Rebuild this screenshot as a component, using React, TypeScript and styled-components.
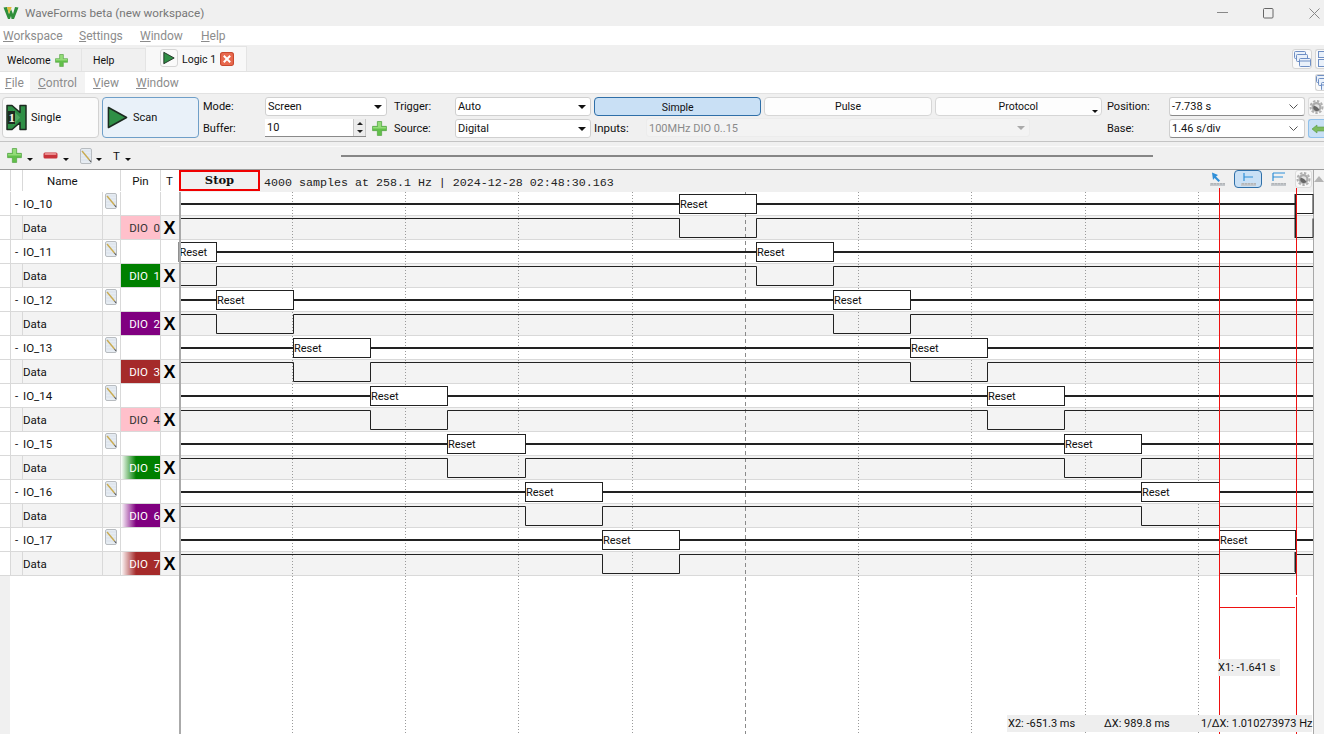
import React from 'react';
import styled, { createGlobalStyle } from 'styled-components';

const GlobalStyle = createGlobalStyle`
  html, body { margin: 0; padding: 0; background: #fff; overflow: hidden; }
  body { font-family: Roboto, "Open Sans", sans-serif; font-size: 11.5px; color: #111; }
`;

// Layout
const Page = styled.div`
  width: 1324px;
  height: 734px;
  display: flex;
  flex-direction: column;
  overflow: hidden;
`;

const TitleBar = styled.div`
  height: 26px;
  background: #f0f0f0;
  display: flex;
  align-items: center;
  padding-left: 3px;
  color: #777;
  font-size: 11.7px;
  span { margin-left: 6px; flex: 1; }
`;

const WinButton = styled.div<{ $last?: boolean }>`
  width: 46px;
  margin-right: ${(p) => (p.$last ? -13 : 0)}px;
  display: flex;
  justify-content: center;
  align-items: center;
`;

const MenuBar = styled.div<{ $height: number; $flush?: boolean }>`
  height: ${(p) => p.$height}px;
  background: #fff;
  display: flex;
  align-items: center;
  padding-left: ${(p) => (p.$flush ? 0 : 3)}px;
  color: #8c8c8c;
  font-size: 12px;
`;

const MenuItem = styled.div<{ $width: number; $hover?: boolean; $pad?: number }>`
  width: ${(p) => p.$width}px;
  height: 100%;
  display: flex;
  align-items: center;
  padding-left: ${(p) => p.$pad ?? (p.$hover ? 8 : 0)}px;
  box-sizing: border-box;
  background: ${(p) => (p.$hover ? '#f3f3f3' : 'transparent')};
  u { text-underline-offset: 1px; }
`;

const TabBar = styled.div`
  height: 27px;
  background: #f0f0f0;
  border-bottom: 1px solid #e2e2e2;
  box-sizing: border-box;
  display: flex;
  align-items: flex-end;
`;

const Tab = styled.div<{ $width: number; $active?: boolean; $pad: number }>`
  width: ${(p) => p.$width}px;
  height: ${(p) => (p.$active ? 25 : 23)}px;
  background: ${(p) => (p.$active ? '#f8f8f8' : '#f0f0f0')};
  border: 1px solid #e4e4e4;
  border-width: 1px 1px 0 0;
  box-sizing: border-box;
  display: flex;
  align-items: center;
  gap: 4px;
  padding-left: ${(p) => p.$pad}px;
  color: #111;
  font-size: 10.5px;
`;

const Spacer = styled.div`
  flex: 1;
`;

const IconFrame = styled.div<{ $width: number; $height: number; $clip?: boolean; $mr?: number }>`
  width: ${(p) => p.$width}px;
  height: ${(p) => p.$height}px;
  margin: 0 ${(p) => p.$mr ?? 0}px ${(p) => (p.$clip && p.$height < 18 ? 0 : 2)}px 0;
  border: 1px solid #d5d5d5;
  border-right: ${(p) => (p.$clip ? 'none' : '1px solid #d5d5d5')};
  border-radius: ${(p) => (p.$clip ? '3px 0 0 3px' : '3px')};
  background: #fafafa;
  box-sizing: border-box;
  overflow: hidden;
  display: flex;
  align-items: center;
  justify-content: ${(p) => (p.$clip ? 'flex-start' : 'center')};
  flex-shrink: 0;
`;

const ToolBar = styled.div`
  height: 49px;
  background: #f0f0f0;
  border-top: 1px solid #e2e2e2;
  border-bottom: 1px solid #c4c4c4;
  box-sizing: border-box;
  display: flex;
  align-items: flex-start;
  padding: 3px 0 0 2px;
  overflow: hidden;
  font-size: 11px;
`;

const RunButton = styled.div<{ $on?: boolean }>`
  width: 97px;
  height: 41px;
  margin-right: 3px;
  flex-shrink: 0;
  box-sizing: border-box;
  border: 1px solid ${(p) => (p.$on ? '#6f9fc8' : '#d2d2d2')};
  border-radius: 4px;
  background: ${(p) => (p.$on ? '#e9f1f9' : '#fbfbfb')};
  display: flex;
  align-items: center;
  gap: ${(p) => (p.$on ? 5 : 4)}px;
  padding-left: ${(p) => (p.$on ? 4 : 3)}px;
`;

const FieldGrid = styled.div<{ $cols: string; $ml: number }>`
  display: grid;
  grid-template-columns: ${(p) => p.$cols};
  grid-auto-rows: 22px;
  margin: -2px 0 0 ${(p) => p.$ml}px;
  align-items: center;
`;

const FieldLabel = styled.span`
  padding-top: 1px;
`;

const Select = styled.div<{ $plain?: boolean; $disabled?: boolean; $width?: number }>`
  height: 19px;
  width: ${(p) => (p.$width ? `${p.$width}px` : 'auto')};
  box-sizing: border-box;
  background: ${(p) => (p.$disabled ? '#f3f3f3' : '#fff')};
  color: ${(p) => (p.$disabled ? '#8a8a8a' : '#111')};
  border: 1px solid ${(p) => (p.$disabled ? '#ececec' : '#d0d0d0')};
  border-bottom: 1px solid ${(p) => (p.$plain ? '#8a8a8a' : p.$disabled ? '#ececec' : '#d0d0d0')};
  border-radius: 3px;
  display: flex;
  align-items: center;
  justify-content: space-between;
  padding: 1px 2px 0 2px;
`;

const Caret = styled.div<{ $muted?: boolean }>`
  width: 0;
  height: 0;
  margin-right: 2px;
  border-left: 4px solid transparent;
  border-right: 4px solid transparent;
  border-top: 4px solid ${(p) => (p.$muted ? '#aaa' : '#111')};
`;

const BufferRow = styled.div`
  display: flex;
  align-items: center;
`;

const Spin = styled.div`
  width: 101px;
  height: 18px;
  box-sizing: border-box;
  background: #fff;
  border-bottom: 1px solid #8a8a8a;
  display: flex;
  align-items: center;
  justify-content: space-between;
  padding-left: 2px;
`;

const SpinArrows = styled.div`
  width: 13px;
  height: 17px;
  background: #ececec;
  border: 1px solid #c8c8c8;
  border-width: 0 1px;
  box-sizing: border-box;
  display: flex;
  flex-direction: column;
  justify-content: space-around;
  align-items: center;
`;

const Tri = styled.div<{ $up?: boolean }>`
  border-left: 3px solid transparent;
  border-right: 3px solid transparent;
  ${(p) => (p.$up ? 'border-bottom: 3px solid #222;' : 'border-top: 3px solid #222;')}
`;

const BufferPlus = styled.span`
  margin-left: 6px;
  display: flex;
`;

const ModeColumn = styled.div`
  width: 508px;
  margin-left: 3px;
  display: flex;
  flex-direction: column;
  flex-shrink: 0;
`;

const ModeTabs = styled.div`
  display: flex;
  gap: 3px;
  height: 22px;
  font-size: 10.5px;
`;

const ModeTab = styled.div<{ $on?: boolean }>`
  width: 168px;
  height: 19px;
  box-sizing: border-box;
  border: 1px solid ${(p) => (p.$on ? '#2f6fa8' : '#d6d6d6')};
  border-radius: 4px;
  background: ${(p) => (p.$on ? '#c9e0f5' : '#fdfdfd')};
  text-align: center;
  line-height: ${(p) => (p.$on ? 20 : 17)}px;
  position: relative;
`;

const ProtoCaret = styled.i`
  position: absolute;
  right: 3px;
  bottom: 2px;
  border-left: 3px solid transparent;
  border-right: 3px solid transparent;
  border-top: 3px solid #111;
`;

const InputsRow = styled.div`
  display: flex;
  align-items: center;
  height: 19px;
  margin-top: -1px;
`;

const InputsLabel = styled.span`
  width: 52px;
  font-size: 11.5px;
`;

const GearFrame = styled.div<{ $on?: boolean }>`
  width: 16px;
  height: 19px;
  margin-bottom: 3px;
  box-sizing: border-box;
  border: 1px solid ${(p) => (p.$on ? '#8fc0ea' : '#dcdcdc')};
  border-right: none;
  border-radius: 3px 0 0 3px;
  background: ${(p) => (p.$on ? '#c9e0f5' : '#f7f7f7')};
  overflow: hidden;
  display: flex;
  align-items: center;
`;

const SideColumn = styled.div`
  margin-left: 3px;
  display: flex;
  flex-direction: column;
`;

const ToolStrip = styled.div`
  height: 28px;
  background: #f0f0f0;
  border-bottom: 1px solid #9b9b9b;
  box-sizing: border-box;
  display: flex;
  align-items: center;
  padding-left: 7px;
`;

const StripItem = styled.div<{ $width: number; $gap: number }>`
  width: ${(p) => p.$width}px;
  display: flex;
  align-items: center;
  gap: ${(p) => p.$gap}px;
`;

const DownMark = styled.i`
  margin-top: 8px;
  border-left: 3px solid transparent;
  border-right: 3px solid transparent;
  border-top: 3px solid #111;
`;

const TrackArea = styled.div`
  flex: 1;
  align-self: stretch;
  margin-top: 4px;
  border-top: 1px solid #fafafa;
  display: flex;
  align-items: flex-start;
  padding: 8px 0 0 181px;
`;

const Track = styled.div`
  width: 812px;
  height: 2px;
  background: #868686;
`;

const Main = styled.div`
  flex: 1;
  display: flex;
  min-height: 0;
`;

const SignalTable = styled.div`
  width: 179px;
  display: flex;
  flex-direction: column;
  flex-shrink: 0;
  background: #fff;
`;

const Row = styled.div<{ $height: number; $shade?: boolean }>`
  height: ${(p) => p.$height}px;
  box-sizing: border-box;
  display: grid;
  grid-template-columns: 11px 12px 80px 18px 40px 18px;
  border-bottom: 1px solid ${(p) => (p.$height === 22 ? 'transparent' : '#d9d9d9')};
  background: ${(p) => (p.$shade ? 'linear-gradient(90deg, #fff 10px, #f3f3f3 10px)' : '#fff')};
`;

const Cell = styled.div<{ $center?: boolean; $rule?: boolean; $pad?: number }>`
  display: flex;
  align-items: center;
  justify-content: ${(p) => (p.$center ? 'center' : 'flex-start')};
  border-right: 1px solid ${(p) => (p.$rule === false ? 'transparent' : '#d9d9d9')};
  padding-left: ${(p) => p.$pad ?? 0}px;
  box-sizing: border-box;
  min-width: 0;
  overflow: hidden;
`;

const PencilCell = styled(Cell)`
  align-items: flex-start;
  padding: 1px 0 0 2px;
  justify-content: flex-start;
`;

const PinCell = styled.div<{ $bg: string; $color: string }>`
  background: ${(p) => p.$bg};
  color: ${(p) => p.$color};
  border-right: 1px solid #d9d9d9;
  box-sizing: border-box;
  display: flex;
  align-items: center;
  justify-content: flex-end;
  white-space: pre;
`;

const TMark = styled.div`
  font-family: "Liberation Sans", sans-serif;
  font-weight: 700;
  font-size: 18px;
  color: #000;
  line-height: 1;
`;

const TableFill = styled.div`
  flex: 1;
  background: linear-gradient(90deg, #f0f0f0 10px, #fff 10px);
`;

const PlotArea = styled.div`
  flex: 1;
  min-width: 0;
  display: flex;
  flex-direction: column;
  position: relative;
`;

const PlotHeader = styled.div`
  height: 22px;
  flex-shrink: 0;
  background: #f0f0f0;
  display: flex;
  align-items: center;
`;

const StopButton = styled.div`
  width: 81px;
  height: 21px;
  margin-top: -1px;
  box-sizing: border-box;
  border: 2px solid #f00000;
  text-align: center;
  line-height: 16px;
  font-family: "DejaVu Serif", serif;
  font-weight: 700;
  font-size: 11.5px;
  color: #111;
`;

const Summary = styled.div`
  margin-left: 4px;
  flex: 1;
  font-family: "Liberation Mono", monospace;
  font-size: 11.67px;
  color: #222;
  padding-top: 3px;
`;

const MeasureIcons = styled.div`
  display: flex;
  align-items: center;
  gap: 9px;
  margin: 0 1px 4px 0;
`;

const MeasureBtn = styled.div<{ $on?: boolean }>`
  width: ${(p) => (p.$on ? 28 : 15)}px;
  height: 18px;
  box-sizing: border-box;
  display: flex;
  justify-content: center;
  align-items: center;
  border: ${(p) => (p.$on ? '1px solid #2f6fa8' : 'none')};
  border-radius: 4px;
  background: ${(p) => (p.$on ? '#c9e0f5' : 'transparent')};
`;

const GearBtn = styled.div`
  width: 17px;
  height: 18px;
  box-sizing: border-box;
  border: 1px solid #dcdcdc;
  border-radius: 3px;
  display: flex;
  align-items: center;
  justify-content: center;
  background: #f7f7f7;
`;

const ScrollGutter = styled.div`
  width: 11px;
  flex-shrink: 0;
  background: #f3f3f3;
  border-left: 1px solid #a8a8a8;
  box-sizing: border-box;
  display: flex;
  justify-content: center;
  padding-top: 6px;
`;

const UpMark = styled.i`
  height: 0;
  border-left: 5px solid transparent;
  border-right: 5px solid transparent;
  border-bottom: 6px solid #b4b4b4;
`;

const Wave = styled.svg`
  display: block;
  flex: 1;
  min-height: 0;
  width: 1134px;
  overflow: visible;
  position: relative;
`;

const ResetText = styled.text`
  font-family: Roboto, "Open Sans", sans-serif;
  font-size: 11px;
  fill: #111;
`;

const Readout = styled.div<{ $right: number; $bottom: number; $width: number }>`
  position: absolute;
  right: ${(p) => p.$right}px;
  bottom: ${(p) => p.$bottom}px;
  width: ${(p) => p.$width}px;
  height: 17px;
  background: #eeeeee;
  display: flex;
  align-items: center;
  font-size: 11px;
  color: #111;
  white-space: pre;
`;

const ReadoutText = styled.span<{ $width: number; $pad?: number }>`
  width: ${(p) => p.$width}px;
  padding-left: ${(p) => p.$pad ?? 0}px;
  box-sizing: border-box;
  flex-shrink: 0;
`;

// Icons
const Logo = () => (
  <svg width="16" height="14" viewBox="0 0 16 14">
    <path d="M0.5 1.5 L4 1 L6 8 L8 3 L10 8 L12 1 L15.5 1.5 L11 13 L8.5 13 L8 10 L7 13 L5 13 Z" fill="#2f8f3a" />
    <path d="M4 1 L6 8 L8 3 L8.6 1 L6.5 1 Z" fill="#e0b93a" />
  </svg>
);

const PlayIcon = ({ size = 22 }: { size?: number }) => (
  <svg width={size} height={size + 2} viewBox="0 0 22 24">
    <path d="M1.5 1.5 L20.5 12 L1.5 22.5 Z" fill="#2f8f46" stroke="#1c2a20" strokeWidth="1.6" strokeLinejoin="round" />
  </svg>
);

const SingleIcon = () => (
  <svg width="21" height="27" viewBox="0 0 21 27">
    <path d="M1 1.5 H6 L14 8.5 V1.5 H20 V25.5 H14 V18.5 L6 25.5 H1 Z" fill="#2f8f46" stroke="#1c2a20" strokeWidth="1.5" strokeLinejoin="round" />
    <path d="M7 6 L14 13.5 L7 21 Z" fill="#4ea65f" />
    <rect x="2" y="7" width="7" height="13" fill="#1c2a20" />
    <text x="2.6" y="18" fontFamily="Liberation Serif, serif" fontWeight="700" fontSize="13" fill="#f4f4e8">1</text>
  </svg>
);

const PlusIcon = ({ size = 14 }: { size?: number }) => (
  <svg width={size} height={size} viewBox="0 0 14 14">
    <path d="M5 0.5 H9 V5 H13.5 V9 H9 V13.5 H5 V9 H0.5 V5 H5 Z" fill="#62c04a" stroke="#4f9f3e" strokeWidth="0.6" />
    <path d="M5.5 1 H8.5 V5.5 H13 V7 H1 V5.5 H5.5 Z" fill="#93dc78" />
  </svg>
);

const MinusIcon = () => (
  <svg width="15" height="8" viewBox="0 0 15 8">
    <rect x="0.5" y="0.5" width="14" height="6" rx="1.5" fill="#c8333a" />
    <rect x="1.5" y="1" width="12" height="2" rx="1" fill="#e98a8c" />
  </svg>
);

const PencilIcon = () => (
  <svg width="12" height="16" viewBox="0 0 12 16">
    <rect x="0.5" y="0.5" width="11" height="15" rx="1.5" fill="#e6ecf2" stroke="#b8bcc0" />
    <path d="M1 3 H11 M1 6 H11 M1 9 H11 M1 12 H11" stroke="#d3dce5" strokeWidth="0.6" />
    <path d="M2 3 L9.5 12" stroke="#c9ab52" strokeWidth="1.4" />
    <path d="M9.5 12 L11 14" stroke="#555" strokeWidth="1.1" />
  </svg>
);

const GearIcon = () => (
  <svg width="15" height="16" viewBox="0 0 15 16" style={{ flexShrink: 0 }}>
    <circle cx="7.5" cy="8" r="6" fill="none" stroke="#b0b0b0" strokeWidth="2" strokeDasharray="2.4 1.6" />
    <circle cx="7.5" cy="8" r="5" fill="#ababab" />
    <circle cx="7.5" cy="8" r="2.8" fill="#e2e2e2" />
    <path d="M5 6.5 A3.2 3.2 0 0 0 10.5 10.5 L8 8 Z" fill="#666" />
  </svg>
);

const StackIcon = () => (
  <svg width="17" height="16" viewBox="0 0 17 16" style={{ flexShrink: 0 }}>
    <g fill="#eaf1fa" stroke="#6f8fc4" strokeWidth="1">
      <rect x="0.5" y="0.5" width="11" height="7" rx="1" />
      <rect x="2.5" y="3.5" width="11" height="7" rx="1" />
      <rect x="5.5" y="7.5" width="11" height="8" rx="1" />
    </g>
    <path d="M5.5 10 H16.5" stroke="#6f8fc4" />
  </svg>
);

const TileIcon = () => (
  <svg width="14" height="16" viewBox="0 0 14 16" style={{ flexShrink: 0, marginLeft: 2 }}>
    <rect x="0.5" y="0.5" width="13" height="6" fill="#eaf1fa" stroke="#6f8fc4" />
    <rect x="0.5" y="8.5" width="13" height="7" fill="#eaf1fa" stroke="#6f8fc4" />
  </svg>
);

const ChevronIcon = styled.svg`
  margin-right: 4px;
`;

const ChevronDown = () => (
  <ChevronIcon width="9" height="6" viewBox="0 0 9 6">
    <path d="M0.5 0.5 L4.5 4.5 L8.5 0.5" fill="none" stroke="#555" strokeWidth="1" />
  </ChevronIcon>
);

const BackArrow = () => (
  <svg width="16" height="10" viewBox="0 0 16 10" style={{ marginLeft: 3, flexShrink: 0 }}>
    <path d="M0 5 L5 1 V3 H16 V7 H5 V9 Z" fill="#7dbb5e" stroke="#5c9a45" strokeWidth="0.6" />
  </svg>
);

const RulerIcon = ({ kind }: { kind: 'arrow' | 'mid' | 'top' }) => (
  <svg width="15" height="14" viewBox="0 0 15 14">
    {kind === 'arrow' && <path d="M2 0.5 L8 3 L6 4.5 L10 8.5 L8.5 10 L4.5 6 L3 8 Z" fill="#2f8fd8" />}
    {kind === 'mid' && <path d="M3 1 V9 M3 5 H12" stroke="#2f8fd8" strokeWidth="1.2" fill="none" />}
    {kind === 'top' && <path d="M2 1 V9 M2 1 H14 M2 5 H12" stroke="#2f8fd8" strokeWidth="1.2" fill="none" />}
    <rect x="0" y="11" width="15" height="3" fill="#c4c8cc" />
    <path d="M2 11 V12.5 M5 11 V12.5 M8 11 V12.5 M11 11 V12.5 M14 11 V12.5" stroke="#8f8f8f" strokeWidth="0.7" />
  </svg>
);

// Data
const PINK = '#ffc0cb';
const GREEN = '#008000';
const PURPLE = '#800080';
const BROWN = '#a52a2a';
const fade = (c: string) => `linear-gradient(90deg, #fff 0, ${c} 15px)`;

const signals = [
  { name: 'IO_10', bg: PINK, color: '#333' },
  { name: 'IO_11', bg: GREEN, color: '#fff' },
  { name: 'IO_12', bg: PURPLE, color: '#fff' },
  { name: 'IO_13', bg: BROWN, color: '#fff' },
  { name: 'IO_14', bg: PINK, color: '#333' },
  { name: 'IO_15', bg: fade(GREEN), color: '#fff' },
  { name: 'IO_16', bg: fade(PURPLE), color: '#fff' },
  { name: 'IO_17', bg: fade(BROWN), color: '#fff' },
];

// 各信号のResetの区間
const edges = [179, 216.5, 293.5, 370.5, 447.5, 525.5, 602.5, 679.5, 756.5, 833.5, 910.5, 987.5, 1064.5, 1141.5, 1219.5, 1295.5, 1313];
const resets: [number, number][][] = [
  [[edges[7], edges[8]], [edges[15], edges[16]]],
  [[edges[0], edges[1]], [edges[8], edges[9]]],
  [[edges[1], edges[2]], [edges[9], edges[10]]],
  [[edges[2], edges[3]], [edges[10], edges[11]]],
  [[edges[3], edges[4]], [edges[11], edges[12]]],
  [[edges[4], edges[5]], [edges[12], edges[13]]],
  [[edges[5], edges[6]], [edges[13], edges[14]]],
  [[edges[6], edges[7]], [edges[14], edges[15]]],
];
const gridLines = [292.5, 405.5, 518.5, 632.5, 858.5, 971.5, 1085.5, 1198.5];
const PLOT_END = 1313;

function WavePlot() {
  return (
    <Wave viewBox="179 192 1134 542">
      {signals.map((_, i) => (
        <g key={i}>
          <rect x="179" y={216 + i * 48} width="1134" height="24" fill="#f3f3f3" />
          <path d={`M179 ${215.5 + i * 48} H1313 M179 ${239.5 + i * 48} H1313`} stroke="#d9d9d9" />
        </g>
      ))}
      {gridLines.map((x) => (
        <path key={x} d={`M${x} 192 V734`} stroke="#9a9a9a" strokeDasharray="1 2" />
      ))}
      <path d="M745.5 192 V734" stroke="#8a8a8a" strokeDasharray="4 3" />
      {resets.map((segs, i) => {
        const y = 192 + i * 48;
        const top = y + 26.5;
        const low = y + 45.5;
        let bus = '';
        let x = 179;
        let data = `M179 ${top}`;
        segs.forEach(([a, b]) => {
          if (a > x) bus += `M${x} ${y + 12} H${a} `;
          x = b;
          data = a === 179
            ? `M179 ${low} H${b} V${top}`
            : `${data} H${a} V${low} H${b} V${top}`;
        });
        if (x < PLOT_END) bus += `M${x} ${y + 12} H${PLOT_END}`;
        data += ` H${PLOT_END}`;
        return (
          <g key={i}>
            <path d={bus} stroke="#222" strokeWidth="2" fill="none" />
            <path d={data} stroke="#222" strokeWidth="1" fill="none" />
            {segs.map(([a, b]) => (
              <g key={a}>
                <rect x={a} y={y + 2.5} width={b - a} height={19} fill="#fff" stroke="#222" />
                {b - a > 30 && <ResetText x={a + 0.5} y={y + 16}>Reset</ResetText>}
              </g>
            ))}
          </g>
        );
      })}
      {/* 右端の太い線 */}
      <path d="M1295.5 194 V238 M1295.5 552 V572" stroke="#222" strokeWidth="2" />
      <path d="M180 192 V734" stroke="#aaa" strokeWidth="2" />
      <path d="M1219.5 188 V734" stroke="#ee1111" />
      <path d="M1296.5 188 V595 M1296.5 597 V734" stroke="#ee1111" />
      <path d="M1220 607.5 H1295" stroke="#ee1111" />
    </Wave>
  );
}

const Menu = ({ label, width, hover, pad }: { label: string; width: number; hover?: boolean; pad?: number }) => (
  <MenuItem $width={width} $hover={hover} $pad={pad}>
    <span><u>{label[0]}</u>{label.slice(1)}</span>
  </MenuItem>
);

export default function App() {
  return (
    <>
      <GlobalStyle />
      <Page>
        <TitleBar>
          <Logo />
          <span>WaveForms beta (new workspace)</span>
          <WinButton>
            <svg width="11" height="2"><rect width="11" height="1" fill="#888" /></svg>
          </WinButton>
          <WinButton>
            <svg width="11" height="11"><rect x="0.5" y="0.5" width="9.5" height="9.5" rx="1" fill="none" stroke="#666" /></svg>
          </WinButton>
          <WinButton $last>
            <svg width="11" height="11"><path d="M0.5 0.5 L10.5 10.5 M10.5 0.5 L0.5 10.5" stroke="#888" /></svg>
          </WinButton>
        </TitleBar>

        <MenuBar $height={19}>
          <Menu label="Workspace" width={76} />
          <Menu label="Settings" width={61} />
          <Menu label="Window" width={61} />
          <Menu label="Help" width={60} />
        </MenuBar>

        <TabBar>
          <Tab $width={82} $pad={7}>Welcome<PlusIcon size={13} /></Tab>
          <Tab $width={64} $pad={11}>Help</Tab>
          <Tab $width={101} $pad={14} $active>
            <IconFrame $width={18} $height={18}><PlayIcon size={12} /></IconFrame>
            Logic 1
            <svg width="14" height="14" viewBox="0 0 13 13">
              <rect x="0.5" y="0.5" width="12" height="12" rx="2" fill="#e8694e" stroke="#c9492f" />
              <path d="M3.5 3.5 L9.5 9.5 M9.5 3.5 L3.5 9.5" stroke="#fff" strokeWidth="1.8" />
            </svg>
          </Tab>
          <Spacer />
          <IconFrame $width={20} $height={20} $mr={3}><StackIcon /></IconFrame>
          <IconFrame $width={9} $height={20} $clip><TileIcon /></IconFrame>
        </TabBar>

        <MenuBar $height={21} $flush>
          <Menu label="File" width={30} pad={5} />
          <Menu label="Control" width={55} hover />
          <Menu label="View" width={51} pad={8} />
          <Menu label="Window" width={60} />
          <Spacer />
          <IconFrame $width={9} $height={17} $clip><StackIcon /></IconFrame>
        </MenuBar>

        <ToolBar>
          <RunButton><SingleIcon />Single</RunButton>
          <RunButton $on><PlayIcon size={21} />Scan</RunButton>

          <FieldGrid $cols="62px 122px" $ml={1}>
            <FieldLabel>Mode:</FieldLabel>
            <Select>Screen<Caret /></Select>
            <FieldLabel>Buffer:</FieldLabel>
            <BufferRow>
              <Spin>
                10
                <SpinArrows><Tri $up /><Tri /></SpinArrows>
              </Spin>
              <BufferPlus><PlusIcon size={15} /></BufferPlus>
            </BufferRow>
          </FieldGrid>

          <FieldGrid $cols="61px 136px" $ml={7}>
            <FieldLabel>Trigger:</FieldLabel>
            <Select>Auto<Caret /></Select>
            <FieldLabel>Source:</FieldLabel>
            <Select>Digital<Caret /></Select>
          </FieldGrid>

          <ModeColumn>
            <ModeTabs>
              <ModeTab $on>Simple</ModeTab>
              <ModeTab>Pulse</ModeTab>
              <ModeTab>Protocol<ProtoCaret /></ModeTab>
            </ModeTabs>
            <InputsRow>
              <InputsLabel>Inputs:</InputsLabel>
              <Select $disabled $width={384}>100MHz DIO 0..15<Caret $muted /></Select>
            </InputsRow>
          </ModeColumn>

          <FieldGrid $cols="62px 136px" $ml={5}>
            <FieldLabel>Position:</FieldLabel>
            <Select $plain>-7.738 s<ChevronDown /></Select>
            <FieldLabel>Base:</FieldLabel>
            <Select $plain>1.46 s/div<ChevronDown /></Select>
          </FieldGrid>

          <SideColumn>
            <GearFrame><GearIcon /></GearFrame>
            <GearFrame $on><BackArrow /></GearFrame>
          </SideColumn>
        </ToolBar>

        <ToolStrip>
          <StripItem $width={36} $gap={5}><PlusIcon size={15} /><DownMark /></StripItem>
          <StripItem $width={37} $gap={5}><MinusIcon /><DownMark /></StripItem>
          <StripItem $width={33} $gap={4}><PencilIcon /><DownMark /></StripItem>
          <StripItem $width={47} $gap={5}>T<DownMark /></StripItem>
          <TrackArea><Track /></TrackArea>
        </ToolStrip>

        <Main>
          <SignalTable>
            <Row $height={22}>
              <Cell />
              <Cell />
              <Cell $rule={false} $pad={24}>Name</Cell>
              <Cell />
              <Cell $center>Pin</Cell>
              <Cell $center $rule={false}>T</Cell>
            </Row>
            {signals.map((s, i) => (
              <React.Fragment key={s.name}>
                <Row $height={24}>
                  <Cell />
                  <Cell $center $rule={false}>-</Cell>
                  <Cell>{s.name}</Cell>
                  <PencilCell><PencilIcon /></PencilCell>
                  <Cell />
                  <Cell $rule={false} />
                </Row>
                <Row $height={24} $shade>
                  <Cell />
                  <Cell />
                  <Cell>Data</Cell>
                  <Cell />
                  <PinCell $bg={s.bg} $color={s.color}>{`DIO  ${i}`}</PinCell>
                  <Cell $center $rule={false}><TMark>X</TMark></Cell>
                </Row>
              </React.Fragment>
            ))}
            <TableFill />
          </SignalTable>

          <PlotArea>
            <PlotHeader>
              <StopButton>Stop</StopButton>
              <Summary>4000 samples at 258.1 Hz | 2024-12-28 02:48:30.163</Summary>
              <MeasureIcons>
                <MeasureBtn><RulerIcon kind="arrow" /></MeasureBtn>
                <MeasureBtn $on><RulerIcon kind="mid" /></MeasureBtn>
                <MeasureBtn><RulerIcon kind="top" /></MeasureBtn>
                <GearBtn><GearIcon /></GearBtn>
              </MeasureIcons>
            </PlotHeader>
            <WavePlot />
            <Readout $right={33} $bottom={58} $width={62}>X1: -1.641 s</Readout>
            <Readout $right={1} $bottom={2} $width={305}>
              <ReadoutText $width={97} $pad={1}>X2: -651.3 ms</ReadoutText>
              <ReadoutText $width={97}>ΔX: 989.8 ms</ReadoutText>
              <ReadoutText $width={110}>1/ΔX: 1.010273973 Hz</ReadoutText>
            </Readout>
          </PlotArea>

          <ScrollGutter><UpMark /></ScrollGutter>
        </Main>
      </Page>
    </>
  );
}
